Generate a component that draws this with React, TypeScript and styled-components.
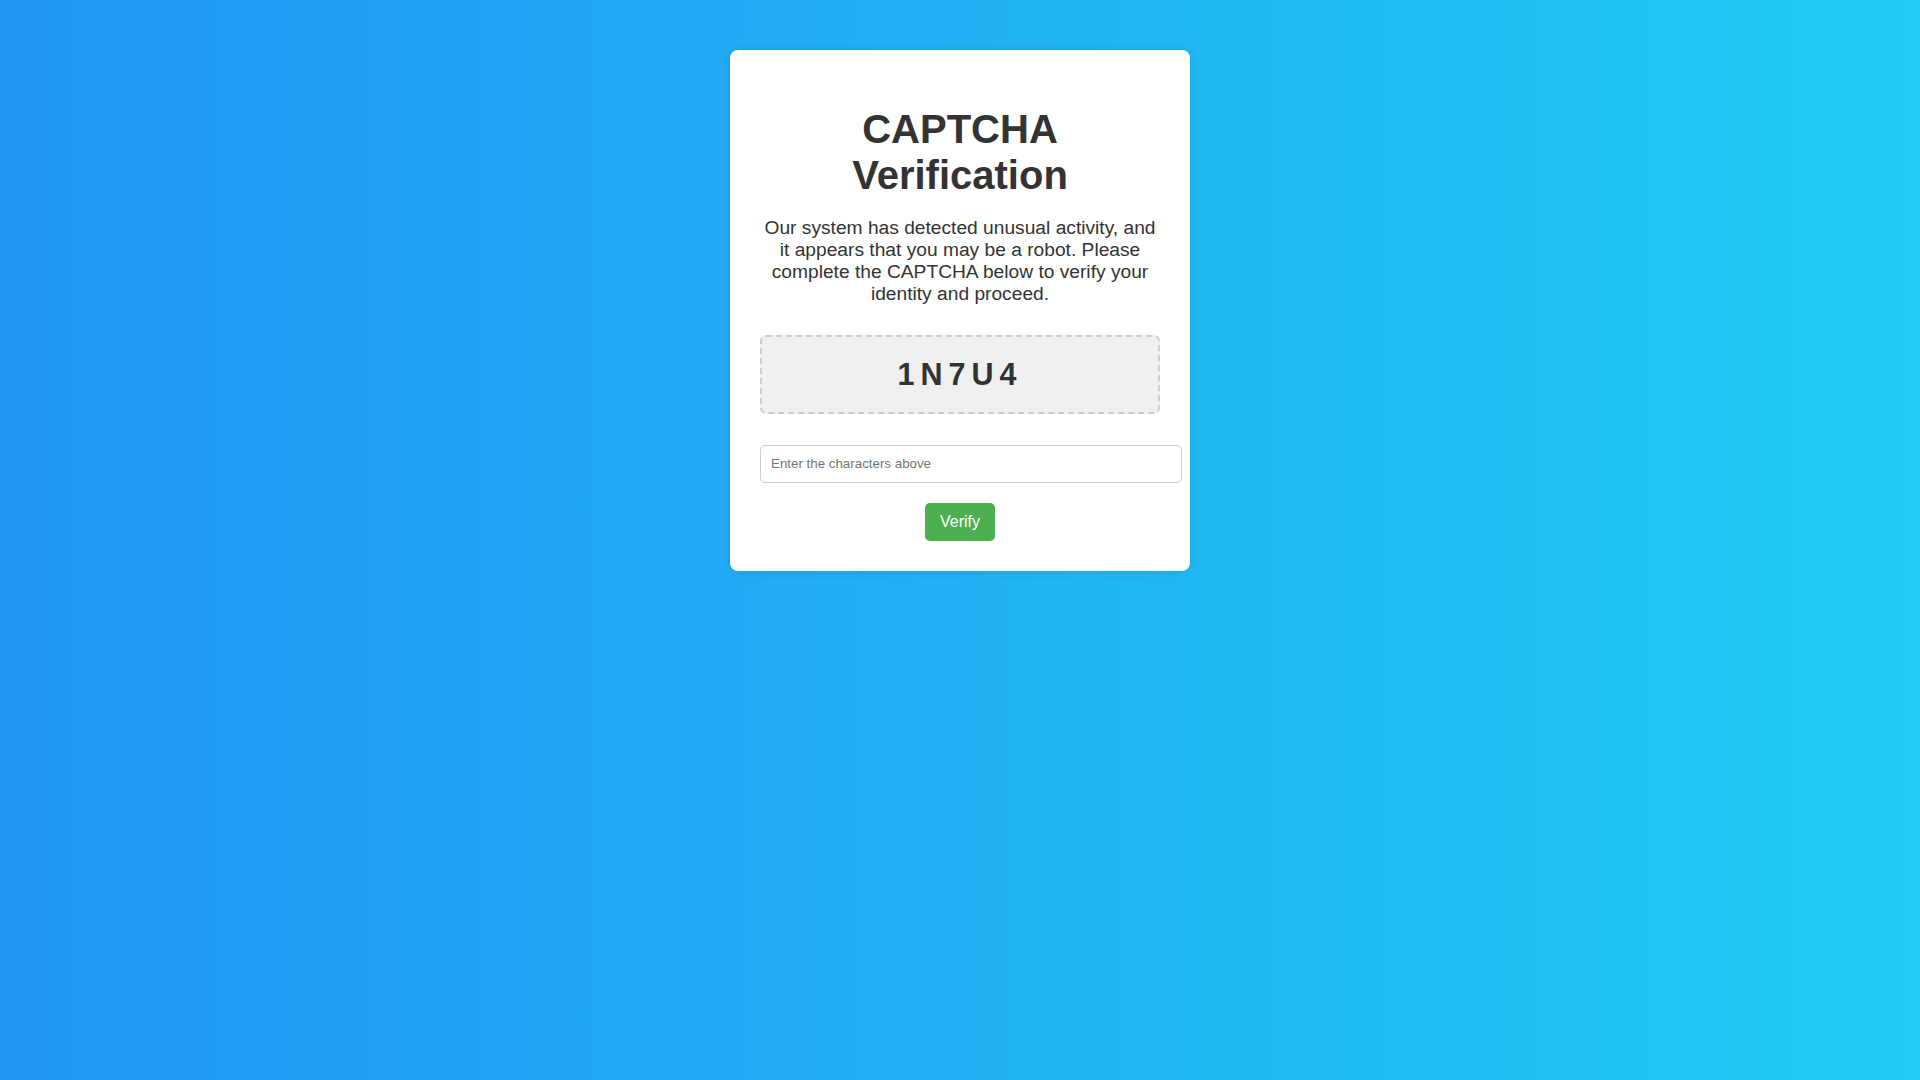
import * as React from 'react';
import styled, {createGlobalStyle} from 'styled-components';

const GlobalStyle = createGlobalStyle`
    html, body {
        margin: 0;
        padding: 0;
    }

    body {
        min-height: 100vh;
        font-family: "Liberation Sans", Arial, sans-serif;
        background: linear-gradient(to right, #2196f3, #21cbf3);
    }
`;

const Page = styled.div`
    display: flex;
    justify-content: center;
    align-items: flex-start;
    min-height: 100vh;
    padding-top: 50px;
    box-sizing: border-box;
`;

const Card = styled.div`
    width: 400px;
    padding: 30px;
    background: #fff;
    border-radius: 8px;
    box-shadow: 0 0 10px rgba(0, 0, 0, 0.1);
    text-align: center;
    color: #333;
`;

const Title = styled.h1`
    margin: 25.5px 0 19.5px;
    font-size: 40px;
    font-weight: bold;
    line-height: 1.15;
`;

const Message = styled.p`
    margin: 0 0 30px;
    font-size: 19.2px;
    line-height: 1.15;
`;

const CodeBox = styled.div`
    margin-bottom: 31px;
    padding: 20px;
    background: #f0f0f0;
    border: 2px dashed #ccc;
    border-radius: 6px;
    font-size: 30.5px;
    font-weight: bold;
    line-height: 1.15;
    letter-spacing: 6px;
    user-select: none;
`;

const CodeInput = styled.input`
    display: block;
    width: 100%;
    margin: 0 0 20px;
    padding: 10px;
    border: 1px solid #ccc;
    border-radius: 5px;
    font-family: "Liberation Sans", Arial, sans-serif;
    font-size: 13.33px;
    line-height: 1.15;
    color: #333;
    outline: none;

    &::placeholder {
        color: #757575;
    }
`;

const VerifyButton = styled.button`
    display: inline-block;
    padding: 10px 15px;
    border: none;
    border-radius: 5px;
    background: #4caf50;
    color: #fff;
    font-family: "Liberation Sans", Arial, sans-serif;
    font-size: 16px;
    line-height: 1.15;
    cursor: pointer;

    &:hover {
        background: #45a049;
    }
`;

export default function App() {
    const [code] = React.useState('1N7U4');
    const [value, setValue] = React.useState('');

    return (
        <>
            <GlobalStyle/>
            <Page>
                <Card>
                    <Title>CAPTCHA Verification</Title>
                    <Message>
                        Our system has detected unusual activity, and it appears that you may be a robot.
                        Please complete the CAPTCHA below to verify your identity and proceed.
                    </Message>
                    <CodeBox>{code}</CodeBox>
                    <CodeInput
                        type="text"
                        placeholder="Enter the characters above"
                        value={value}
                        onChange={e => setValue(e.target.value)}
                    />
                    <VerifyButton type="button">Verify</VerifyButton>
                </Card>
            </Page>
        </>
    );
}
